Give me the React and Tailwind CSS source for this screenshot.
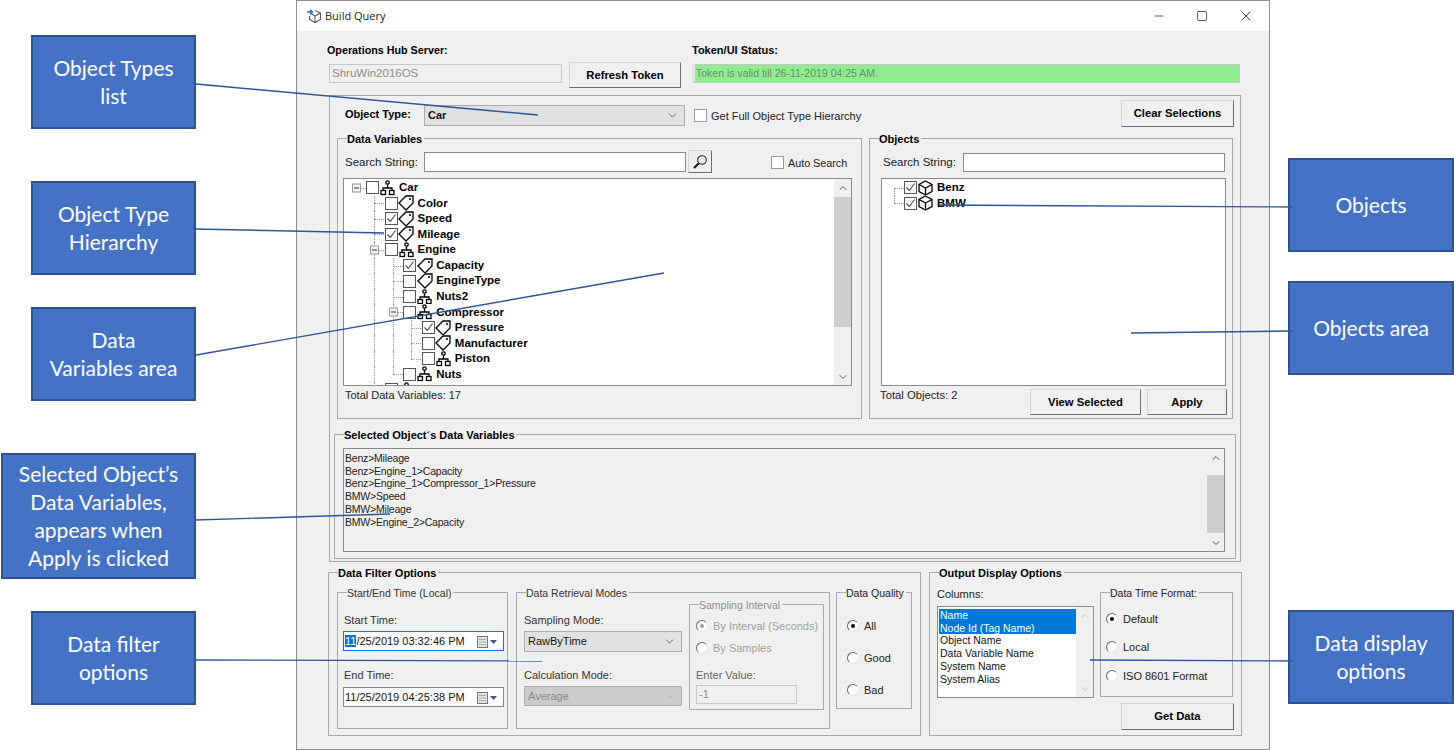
import React from 'react';
import { ChevronDown, ChevronUp, Minus, Square, X } from 'lucide-react';

const treeRows = [
    { name: 'Car', level: 0, kind: 'node', open: true },
    { name: 'Color', level: 1, kind: 'tag', v: [1] },
    { name: 'Speed', level: 1, kind: 'tag', checked: true, v: [1] },
    { name: 'Mileage', level: 1, kind: 'tag', checked: true, v: [1] },
    { name: 'Engine', level: 1, kind: 'node', open: true, v: [1] },
    { name: 'Capacity', level: 2, kind: 'tag', checked: true, v: [1, 2] },
    { name: 'EngineType', level: 2, kind: 'tag', v: [1, 2] },
    { name: 'Nuts2', level: 2, kind: 'node', v: [1, 2] },
    { name: 'Compressor', level: 2, kind: 'node', open: true, v: [1, 2] },
    { name: 'Pressure', level: 3, kind: 'tag', checked: true, v: [1, 2, 3] },
    { name: 'Manufacturer', level: 3, kind: 'tag', v: [1, 2, 3] },
    { name: 'Piston', level: 3, kind: 'node', v: [1, 2], end: 3 },
    { name: 'Nuts', level: 2, kind: 'node', v: [1], end: 2 },
    { name: '', level: 1, kind: 'node', v: [1] },
];

const objectRows = [
    { name: 'Benz', level: 0, kind: 'cube', checked: true, start: 0 },
    { name: 'BMW', level: 0, kind: 'cube', checked: true, end: 0 },
];

const selectedVars = [
    'Benz>Mileage',
    'Benz>Engine_1>Capacity',
    'Benz>Engine_1>Compressor_1>Pressure',
    'BMW>Speed',
    'BMW>Mileage',
    'BMW>Engine_2>Capacity',
];

const columnNames = ['Object Name', 'Data Variable Name', 'System Name', 'System Alias'];

const guideX = (level) => 11.5 + level * 18.6;

function NodeIcon() {
    return (
        <svg width="15" height="16" viewBox="0 0 15 16" fill="none" stroke="#000" strokeWidth="1.3">
            <circle cx="7.5" cy="2.5" r="1.7" />
            <path d="M7.5 4.5V8M3 10.5V8H12V10.5" />
            <rect x="1" y="10.5" width="4.5" height="4" />
            <rect x="9.5" y="10.5" width="4.5" height="4" />
        </svg>
    );
}

function TagIcon() {
    return (
        <svg width="16" height="16" viewBox="0 0 16 16" fill="none" stroke="#000" strokeWidth="1.3">
            <path d="M1 8L8 1H15V8L8 15Z" />
            <circle cx="12" cy="4" r="0.4" fill="#000" />
        </svg>
    );
}

function CubeIcon() {
    return (
        <svg width="15" height="16" viewBox="0 0 15 16" fill="none" stroke="#000" strokeWidth="1.3">
            <path d="M7.5 1L14 4.5V11.5L7.5 15L1 11.5V4.5Z" />
            <path d="M1 4.5L7.5 8L14 4.5M7.5 8V15" />
        </svg>
    );
}

function CheckBox({ checked, className = '' }) {
    return (
        <span className={`flex h-[13px] w-[13px] shrink-0 items-center justify-center border bg-white ${className}`}>
            {checked && (
                <svg width="11" height="11" viewBox="0 0 11 11" fill="none" stroke="#444" strokeWidth="1.1">
                    <path d="M1.5 5.5L4.3 8.5L9.5 1.5" />
                </svg>
            )}
        </span>
    );
}

function TreeRow({ row }) {
    const left = 22 + row.level * 18.6;
    return (
        <div className="relative flex h-[15.55px] items-center text-[11.5px]" style={{ paddingLeft: left }}>
            {(row.v || []).map((l) => (
                <span key={l} className="absolute top-0 bottom-0 border-l border-dotted border-[#999]" style={{ left: guideX(l) }} />
            ))}
            {row.end !== undefined && (
                <span className="absolute top-0 h-1/2 border-l border-dotted border-[#999]" style={{ left: guideX(row.end) }} />
            )}
            {row.start !== undefined && (
                <span className="absolute top-1/2 bottom-0 border-l border-dotted border-[#999]" style={{ left: guideX(row.start) }} />
            )}
            <span className="absolute top-1/2 border-t border-dotted border-[#999]" style={{ left: guideX(row.level), width: 10 }} />
            {row.open && (
                <span
                    className="absolute top-1/2 flex h-[9px] w-[9px] -translate-y-1/2 items-center justify-center border border-[#999] bg-[#f4f4f4]"
                    style={{ left: guideX(row.level) - 4 }}
                >
                    <span className="h-px w-[5px] bg-[#333]" />
                </span>
            )}
            <CheckBox checked={row.checked} className="relative border-[#555]" />
            <span className="relative flex w-[17px] shrink-0 justify-center bg-white">
                {row.kind === 'node' && <NodeIcon />}
                {row.kind === 'tag' && <TagIcon />}
                {row.kind === 'cube' && <CubeIcon />}
            </span>
            <span className="ml-[3px] font-bold whitespace-nowrap text-black">{row.name}</span>
        </div>
    );
}

function GroupBox({ title, bold, disabled, className = '', children }) {
    return (
        <div className={`relative shrink-0 border border-[#a9a9a9] ${className}`}>
            {title && (
                <span
                    className={`absolute -top-[7px] left-[9px] bg-[#f0f0f0] pr-[2px] leading-[14px] whitespace-nowrap ${bold ? 'text-[11px] font-bold text-black' : 'text-[10.5px]'} ${disabled ? 'text-[#8c8c8c]' : ''}`}
                >
                    {title}
                </span>
            )}
            {children}
        </div>
    );
}

function WinButton({ children, className = '' }) {
    return (
        <button className={`shrink-0 border border-[#d8d8d8] border-r-[#6d6d6d] border-b-[#6d6d6d] bg-[#f0f0f0] text-[11.25px] font-bold text-black ${className}`}>
            {children}
        </button>
    );
}

function Dropdown({ value, disabled, className = '' }) {
    return (
        <div
            className={`flex shrink-0 items-center justify-between border border-[#adadad] pr-[5px] pl-[3px] ${disabled ? 'bg-[#cccccc] text-[#8a8a8a]' : 'bg-[#e1e1e1] text-[#111]'} ${className}`}
        >
            <span>{value}</span>
            <ChevronDown size={13} strokeWidth={1.4} color={disabled ? '#a8a8a8' : '#444'} />
        </div>
    );
}

function TextBox({ className = '', children }) {
    return <div className={`shrink-0 border border-[#8a8a8a] bg-white ${className}`}>{children}</div>;
}

function Radio({ label, selected, disabled, className = '' }) {
    return (
        <div className={`flex items-center ${disabled ? 'text-[#a0a0a0]' : 'text-[#222]'} ${className}`}>
            <span className="flex h-[12px] w-[12px] shrink-0 items-center justify-center rounded-full border border-[#e6e6e6] border-t-[#666] border-l-[#666] bg-white">
                {selected && <span className={`h-[4px] w-[4px] rounded-full ${disabled ? 'bg-[#999]' : 'bg-black'}`} />}
            </span>
            <span className="ml-[5px] whitespace-nowrap">{label}</span>
        </div>
    );
}

function ScrollBar({ thumbClass, disabled }) {
    const color = disabled ? '#c4c4c4' : '#444';
    return (
        <div className="flex w-[17px] shrink-0 flex-col items-center bg-[#f0f0f0]">
            <div className="flex h-[17px] items-center">
                <ChevronUp size={12} strokeWidth={1.8} color={color} />
            </div>
            <div className="w-full flex-1">
                {thumbClass && <div className={`w-full bg-[#cdcdcd] ${thumbClass}`} />}
            </div>
            <div className="flex h-[17px] items-center">
                <ChevronDown size={12} strokeWidth={1.8} color={color} />
            </div>
        </div>
    );
}

function CalendarIcon() {
    return (
        <svg width="22" height="13" viewBox="0 0 22 13" className="shrink-0">
            <rect x="0.5" y="1.5" width="10" height="11" fill="#e4e4e4" stroke="#777" />
            <path d="M2 4.5H9M2 7H9M2 9.5H9" stroke="#aaa" />
            <path d="M13 5H20L16.5 9Z" fill="#3b5a8c" />
        </svg>
    );
}

function DatePicker({ value, focused, className = '' }) {
    return (
        <div className={`flex h-[20px] w-[161px] items-center justify-between border bg-white pr-[4px] pl-[1px] text-[#111] ${focused ? 'border-[#0078d7]' : 'border-[#8a8a8a]'} ${className}`}>
            <span className="whitespace-nowrap">
                {focused ? <span className="bg-[#0078d7] text-white">{value.slice(0, 2)}</span> : value.slice(0, 2)}
                {value.slice(2)}
            </span>
            <CalendarIcon />
        </div>
    );
}

function Callout({ children, className = '' }) {
    return (
        <div className={`flex shrink-0 items-center justify-center border-2 border-[#2f528f] bg-[#4472c4] px-1 text-center font-['Lato',sans-serif] text-[21px] leading-[28px] text-white ${className}`}>
            <span>{children}</span>
        </div>
    );
}

function LeaderLines() {
    const lines = [
        [196, 84, 538, 115],
        [196, 229, 384, 233],
        [196, 355, 664, 273],
        [196, 520, 390, 514],
        [196, 660, 542, 661],
        [1292, 207, 940, 205],
        [1292, 331, 1131, 333],
        [1292, 661, 1090, 660],
    ];
    return (
        <svg className="pointer-events-none absolute top-0 left-0" width="1454" height="750">
            {lines.map((l, i) => (
                <line key={i} x1={l[0]} y1={l[1]} x2={l[2]} y2={l[3]} stroke="#2f5597" strokeWidth="1.4" />
            ))}
        </svg>
    );
}

function TitleBar() {
    return (
        <div className="flex h-[30px] shrink-0 items-center bg-white">
            <svg width="16" height="16" viewBox="0 0 16 16" fill="none" className="ml-[9px] shrink-0">
                <path d="M9 2.5L14.5 5V11.5L9 14.5L3.5 11.5V8" stroke="#555" strokeWidth="1.1" />
                <path d="M5 5.5L9 8L14.5 5M9 8V14.5" stroke="#555" strokeWidth="1.1" />
                <path d="M1 4H6M4 1.8L6.5 4L4 6.2" stroke="#1b75bb" strokeWidth="1.4" />
            </svg>
            <span className="ml-[3px] font-['Open_Sans',sans-serif] text-[11px] text-[#222]">Build Query</span>
            <div className="ml-auto flex items-center text-[#111]">
                <Minus size={14} strokeWidth={1.2} className="mr-[30px]" />
                <Square size={12} strokeWidth={1.4} className="mr-[30px]" />
                <X size={16} strokeWidth={1.2} className="mr-[15px]" />
            </div>
        </div>
    );
}

function ServerRow() {
    return (
        <div className="mt-[13px] ml-px flex items-start">
            <div className="w-[352px] shrink-0">
                <div className="-ml-[2px] h-[13px] text-[10.75px] leading-[13px] font-bold text-black">Operations Hub Server:</div>
                <div className="mt-[5px] flex items-start">
                    <div className="mt-[2px] flex h-[19px] w-[233px] items-center border border-[#c8c8c8] bg-[#f0f0f0] pl-[2px] text-[11.5px] text-[#8c8c8c]">ShruWin2016OS</div>
                    <WinButton className="ml-[7px] h-[26px] w-[112px]">Refresh Token</WinButton>
                </div>
            </div>
            <div className="ml-[11px]">
                <div className="h-[13px] leading-[13px] font-bold text-black">Token/UI Status:</div>
                <div className="mt-[7px] flex h-[19px] w-[548px] items-center border border-[#c8c8c8] border-l-[3px] border-l-[#e4e4e4] bg-[#90ee90] pl-[1px] text-[10.5px] text-[#6a8a6a]">
                    Token is valid till 26-11-2019 04:25 AM.
                </div>
            </div>
        </div>
    );
}

function ObjectTypeRow() {
    return (
        <div className="flex items-start pt-[4px] pr-[6px] pl-[15px]">
            <span className="mt-[7px] w-[79px] shrink-0 leading-[14px] font-bold text-black">Object Type:</span>
            <Dropdown value="Car" className="mt-[5px] h-[21px] w-[261px] font-bold" />
            <CheckBox className="mt-[9px] ml-[9px] border-[#999]" />
            <span className="mt-[9px] ml-[4px] leading-[14px] text-[#222]">Get Full Object Type Hierarchy</span>
            <WinButton className="ml-auto h-[27px] w-[113px]">Clear Selections</WinButton>
        </div>
    );
}

function DataVariablesPanel() {
    return (
        <GroupBox title="Data Variables" bold className="h-[281px] w-[525px]">
            <div className="flex items-start pt-[11px] pl-[7px]">
                <span className="mt-[5px] w-[79px] shrink-0 text-[11.5px] leading-[14px] text-[#222]">Search String:</span>
                <TextBox className="mt-[2px] h-[20px] w-[262px]" />
                <button className="ml-[2px] flex h-[23px] w-[24px] shrink-0 items-center justify-center border border-[#d8d8d8] border-r-[#6d6d6d] border-b-[#6d6d6d] bg-[#f0f0f0]">
                    <svg width="16" height="16" viewBox="0 0 16 16" fill="none" stroke="#222">
                        <circle cx="10" cy="6" r="4.3" strokeWidth="1.1" />
                        <path d="M6.8 9.2L2 14" strokeWidth="2.2" />
                    </svg>
                </button>
                <CheckBox className="mt-[6px] ml-[59px] border-[#999]" />
                <span className="mt-[6px] ml-[4px] text-[10.75px] leading-[14px] text-[#222]">Auto Search</span>
            </div>
            <div className="mt-[5px] ml-[5px] flex h-[208px] w-[509px] overflow-hidden border border-[#8a8a8a] bg-white">
                <div className="min-w-0 flex-1 pt-px">
                    {treeRows.map((row, i) => <TreeRow key={i} row={row} />)}
                </div>
                <ScrollBar thumbClass="mt-px h-[130px]" />
            </div>
            <div className="mt-[2px] ml-[7px] leading-[14px] text-[#222]">Total Data Variables: 17</div>
        </GroupBox>
    );
}

function ObjectsPanel() {
    return (
        <GroupBox title="Objects" bold className="h-[281px] w-[364px]">
            <div className="flex items-start pt-[14px] pl-[13px]">
                <span className="mt-[2px] w-[80px] shrink-0 text-[11.5px] leading-[14px] text-[#222]">Search String:</span>
                <TextBox className="h-[19px] w-[262px]" />
            </div>
            <div className="mt-[6px] ml-[11px] h-[208px] w-[345px] border border-[#8a8a8a] bg-white pt-px">
                {objectRows.map((row) => <TreeRow key={row.name} row={row} />)}
            </div>
            <div className="mt-[3px] flex items-start pl-[10px]">
                <span className="-mt-[1px] text-[11.25px] leading-[14px] text-[#222]">Total Objects: 2</span>
                <WinButton className="ml-auto h-[26px] w-[111px]">View Selected</WinButton>
                <WinButton className="mr-[5px] ml-[6px] h-[26px] w-[80px]">Apply</WinButton>
            </div>
        </GroupBox>
    );
}

function SelectedPanel() {
    return (
        <GroupBox title="Selected Object´s Data Variables" bold className="mt-[15px] ml-[4px] h-[125px] w-[902px]">
            <div className="mt-[13px] ml-[8px] flex h-[104px] w-[882px] border border-[#8a8a8a] bg-[#f0f0f0]">
                <div className="flex-1 pt-[3px] pl-[1px] text-[10.5px] leading-[12.7px] tracking-[-0.2px] text-[#222]">
                    {selectedVars.map((v) => <div key={v}>{v}</div>)}
                </div>
                <ScrollBar thumbClass="mt-[9px] h-[58px]" />
            </div>
        </GroupBox>
    );
}

function FilterPanel() {
    return (
        <GroupBox title="Data Filter Options" bold className="h-[164px] w-[593px]">
            <div className="mt-[19px] ml-[8px] flex items-start">
                <GroupBox title="Start/End Time (Local)" className="h-[137px] w-[171px] text-[#333]">
                    <div className="mt-[20px] ml-[6px] h-[14px] leading-[14px]">Start Time:</div>
                    <DatePicker value="11/25/2019 03:32:46 PM" focused className="mt-[4px] ml-[5px]" />
                    <div className="mt-[17px] ml-[6px] h-[14px] leading-[14px]">End Time:</div>
                    <DatePicker value="11/25/2019 04:25:38 PM" className="mt-[5px] ml-[5px]" />
                </GroupBox>
                <GroupBox title="Data Retrieval Modes" className="ml-[8px] flex h-[137px] w-[314px] text-[#333]">
                    <div className="ml-[7px] w-[158px]">
                        <div className="mt-[20px] h-[14px] leading-[14px]">Sampling Mode:</div>
                        <Dropdown value="RawByTime" className="mt-[4px] h-[21px] w-[158px]" />
                        <div className="mt-[16px] h-[14px] leading-[14px]">Calculation Mode:</div>
                        <Dropdown value="Average" disabled className="mt-[4px] h-[20px] w-[158px]" />
                    </div>
                    <GroupBox title="Sampling Interval" disabled className="mt-[11px] ml-[7px] h-[106px] w-[135px]">
                        <Radio label="By Interval (Seconds)" selected disabled className="mt-[14px] ml-[6px] h-[14px]" />
                        <Radio label="By Samples" disabled className="mt-[8px] ml-[6px] h-[14px]" />
                        <div className="mt-[13px] ml-[6px] h-[14px] leading-[14px] text-[#666]">Enter Value:</div>
                        <div className="mt-[3px] ml-[6px] flex h-[19px] w-[101px] items-center border border-[#c8c8c8] bg-[#f0f0f0] pl-[2px] text-[#8c8c8c]">-1</div>
                    </GroupBox>
                </GroupBox>
                <GroupBox title="Data Quality" className="ml-[6px] h-[117px] w-[76px] text-[#222]">
                    <Radio label="All" selected className="mt-[26px] ml-[10px] h-[14px]" />
                    <Radio label="Good" className="mt-[18px] ml-[10px] h-[14px]" />
                    <Radio label="Bad" className="mt-[18px] ml-[10px] h-[14px]" />
                </GroupBox>
            </div>
        </GroupBox>
    );
}

function OutputPanel() {
    return (
        <GroupBox title="Output Display Options" bold className="ml-[8px] h-[164px] w-[313px]">
            <div className="flex items-start">
                <div className="ml-[7px] w-[157px] shrink-0">
                    <div className="mt-[14px] h-[14px] leading-[14px] text-[#222]">Columns:</div>
                    <div className="mt-[5px] flex h-[92px] border border-[#8a8a8a] bg-white">
                        <div className="flex-1 pt-[2px] pl-px text-[10.5px] leading-[12.7px] text-[#111]">
                            <div className="bg-[#0078d7] pl-px text-white">Name</div>
                            <div className="bg-[#0078d7] pl-px text-white">Node Id (Tag Name)</div>
                            {columnNames.map((c) => <div key={c} className="pl-px">{c}</div>)}
                        </div>
                        <ScrollBar disabled />
                    </div>
                </div>
                <div className="ml-[6px]">
                    <GroupBox title="Data Time Format:" className="mt-[19px] h-[105px] w-[133px] text-[#222]">
                        <Radio label="Default" selected className="mt-[19px] ml-[5px] h-[14px]" />
                        <Radio label="Local" className="mt-[14px] ml-[5px] h-[14px]" />
                        <Radio label="ISO 8601 Format" className="mt-[15px] ml-[5px] h-[14px]" />
                    </GroupBox>
                    <WinButton className="mt-[6px] ml-[21px] h-[27px] w-[113px]">Get Data</WinButton>
                </div>
            </div>
        </GroupBox>
    );
}

function BuildQueryWindow() {
    return (
        <div className="flex h-[750px] w-[974px] shrink-0 flex-col border border-[#8f8f8f] bg-[#f0f0f0] font-['Liberation_Sans',sans-serif] text-[11px]">
            <TitleBar />
            <div className="pl-[31px]">
                <ServerRow />
                <div className="mt-[7px] ml-px h-[467px] w-[912px] border border-[#a9a9a9]">
                    <ObjectTypeRow />
                    <div className="mt-[11px] ml-[7px] flex gap-[7px]">
                        <DataVariablesPanel />
                        <ObjectsPanel />
                    </div>
                    <SelectedPanel />
                </div>
                <div className="mt-[10px] flex">
                    <FilterPanel />
                    <OutputPanel />
                </div>
            </div>
        </div>
    );
}

export default function App() {
    return (
        <div className="relative flex h-[750px] w-[1454px] overflow-hidden bg-white">
            <div className="flex w-[296px] shrink-0 flex-col items-end pr-[100px]">
                <Callout className="mt-[35px] h-[94px] w-[165px]">Object Types<br />list</Callout>
                <Callout className="mt-[52px] h-[94px] w-[165px]">Object Type<br />Hierarchy</Callout>
                <Callout className="mt-[32px] h-[94px] w-[165px]">Data<br />Variables area</Callout>
                <Callout className="mt-[52px] h-[126px] w-[195px]">Selected Object’s<br />Data Variables,<br />appears when<br />Apply is clicked</Callout>
                <Callout className="mt-[32px] h-[94px] w-[165px]">Data filter<br />options</Callout>
            </div>
            <BuildQueryWindow />
            <div className="flex flex-1 flex-col pl-[18px]">
                <Callout className="mt-[158px] h-[94px] w-[166px]">Objects</Callout>
                <Callout className="mt-[29px] h-[94px] w-[166px]">Objects area</Callout>
                <Callout className="mt-[235px] h-[94px] w-[166px]">Data display<br />options</Callout>
            </div>
            <LeaderLines />
        </div>
    );
}
